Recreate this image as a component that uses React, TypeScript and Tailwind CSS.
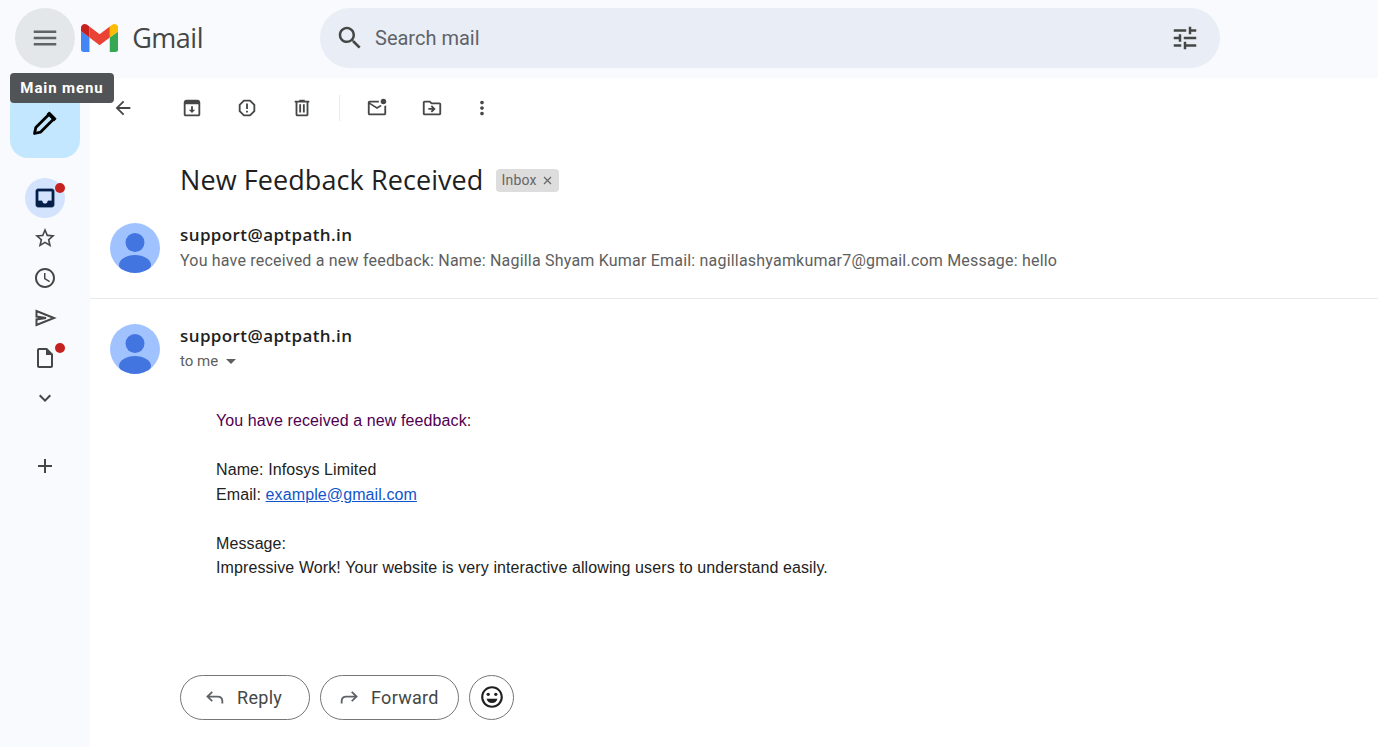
import type { ReactNode } from 'react';

function Icon({ size = 24, className = '', children }: { size?: number; className?: string; children: ReactNode }) {
  return (
    <svg width={size} height={size} viewBox="0 0 24 24" fill="currentColor" className={className}>
      {children}
    </svg>
  );
}

function GmailLogo() {
  return (
    <svg width="38" height="28" viewBox="52 42 88 66">
      <path fill="#4285f4" d="M58 108h14V74L52 59v43c0 3.32 2.69 6 6 6" />
      <path fill="#34a853" d="M120 108h14c3.32 0 6-2.69 6-6V59l-20 15" />
      <path fill="#fbbc04" d="M120 48v26l20-15v-8c0-7.42-8.47-11.65-14.4-7.2" />
      <path fill="#ea4335" d="M72 74V48l24 18 24-18v26L96 92" />
      <path fill="#c5221f" d="M52 51v8l20 15V48l-5.6-4.2c-5.94-4.45-14.4-.22-14.4 7.2" />
    </svg>
  );
}

function Avatar() {
  return (
    <svg width="50" height="50" viewBox="0 0 50 50" className="shrink-0">
      <defs>
        <clipPath id="avatar-clip">
          <circle cx="25" cy="25" r="25" />
        </clipPath>
      </defs>
      <circle cx="25" cy="25" r="25" fill="#a0c3ff" />
      <g clipPath="url(#avatar-clip)" fill="#4375e0">
        <circle cx="25" cy="19.5" r="9.5" />
        <ellipse cx="25" cy="42" rx="16" ry="10" />
      </g>
    </svg>
  );
}

function SideIcon({ dot, active, children }: { dot?: boolean; active?: boolean; children: ReactNode }) {
  return (
    <div className={`relative flex h-10 w-10 items-center justify-center rounded-full ${active ? 'bg-[#d3e3fd] text-[#041e49]' : 'text-[#444746]'}`}>
      {children}
      {dot && <span className="absolute right-0 top-[5px] h-[10px] w-[10px] rounded-full bg-[#c5221f]" />}
    </div>
  );
}

function ToolIcon({ className = '', children }: { className?: string; children: ReactNode }) {
  return <div className={`flex h-[22px] w-[22px] items-center justify-center text-[#444746] ${className}`}>{children}</div>;
}

export default function App() {
  return (
    <div className="relative flex h-[747px] w-[1378px] flex-col overflow-hidden bg-[#f8fafd] font-['Roboto',sans-serif]">
      {/* Top bar */}
      <header className="flex h-[78px] shrink-0 items-start">
        <div className="ml-[15px] mt-[8px] flex h-[60px] w-[60px] items-center justify-center rounded-full bg-[#e4e7ea] text-[#5f6368]">
          <Icon size={30}>
            <path d="M3 18h18v-2H3v2zm0-5h18v-2H3v2zm0-7v2h18V6H3z" />
          </Icon>
        </div>
        <div className="ml-[6px] mt-[24px] flex h-[28px] w-[122px] items-center">
          <GmailLogo />
          <span className="ml-[14px] font-['Open_Sans',sans-serif] text-[27px] leading-[28px] tracking-[-0.5px] text-[#444746]">Gmail</span>
        </div>
        <div className="ml-[117px] mt-[8px] flex h-[60px] w-[900px] items-center rounded-full bg-[#e9eef6] pl-[15px] pr-[20px] text-[#444746]">
          <Icon size={30}>
            <path d="M15.5 14h-.79l-.28-.27C15.41 12.59 16 11.11 16 9.5 16 5.91 13.09 3 9.5 3S3 5.91 3 9.5 5.91 16 9.5 16c1.61 0 3.09-.59 4.23-1.57l.27.28v.79l5 4.99L20.49 19l-4.99-5zm-6 0C7.01 14 5 11.99 5 9.5S7.01 5 9.5 5 14 7.01 14 9.5 11.99 14 9.5 14z" />
          </Icon>
          <span className="ml-[10px] flex-1 text-[20px] text-[#5f6368]">Search mail</span>
          <Icon size={30}>
            <path d="M3 17v2h6v-2H3zM3 5v2h10V5H3zm10 16v-2h8v-2h-8v-2h-2v6h2zM7 9v2H3v2h4v2h2V9H7zm14 4v-2H11v2h10zm-6-4h2V7h4V5h-4V3h-2v6z" />
          </Icon>
        </div>
      </header>

      <div className="flex flex-1">
        {/* Left rail */}
        <aside className="flex w-[90px] shrink-0 flex-col">
          <div className="ml-[10px] mt-[10px] flex h-[70px] w-[70px] items-center justify-center rounded-[18px] bg-[#c2e7ff] text-black">
            <svg width="26" height="26" viewBox="0 0 26 26" fill="none" stroke="currentColor" strokeWidth="2.8" strokeLinejoin="round">
              <path d="M2.5 23.5l1.3-5.9L17.6 3.8l4.6 4.6L8.4 22.2z" />
              <path d="M17.2 1.4l7.4 7.4-2.6 2.6-7.4-7.4z" fill="currentColor" stroke="none" />
            </svg>
          </div>
          <div className="ml-[25px] mt-[20px] flex flex-col">
            <SideIcon active dot>
              <Icon>
                <path stroke="currentColor" strokeWidth="0.8" d="M19 3H4.99c-1.11 0-1.98.89-1.98 2L3 19c0 1.1.88 2 1.99 2H19c1.1 0 2-.9 2-2V5c0-1.11-.9-2-2-2zm0 12h-4c0 1.66-1.35 3-3 3s-2.99-1.34-3-3H4.99V5H19v10z" />
              </Icon>
            </SideIcon>
            <SideIcon>
              <Icon>
                <path d="M22 9.24l-7.19-.62L12 2 9.19 8.63 2 9.24l5.46 4.73L5.82 21 12 17.27 18.18 21l-1.63-7.03L22 9.24zM12 15.4l-3.76 2.27 1-4.28-3.32-2.88 4.38-.38L12 6.1l1.71 4.04 4.38.38-3.32 2.88 1 4.28L12 15.4z" />
              </Icon>
            </SideIcon>
            <SideIcon>
              <Icon>
                <path d="M11.99 2C6.47 2 2 6.48 2 12s4.47 10 9.99 10C17.52 22 22 17.52 22 12S17.52 2 11.99 2zM12 20c-4.42 0-8-3.58-8-8s3.58-8 8-8 8 3.58 8 8-3.58 8-8 8z" />
                <path d="M12.5 7H11v6l5.25 3.15.75-1.23-4.5-2.67z" />
              </Icon>
            </SideIcon>
            <SideIcon>
              <svg width="24" height="24" viewBox="0 0 24 24" fill="none" stroke="currentColor" strokeWidth="2">
                <path d="M3.5 5v5.6L13 12l-9.5 1.4V19L21 12z" />
              </svg>
            </SideIcon>
            <SideIcon dot>
              <Icon>
                <path d="M14 2H6c-1.1 0-1.99.9-1.99 2L4 20c0 1.1.89 2 1.99 2H18c1.1 0 2-.9 2-2V8l-6-6zM6 20V4h7v5h5v11H6z" />
              </Icon>
            </SideIcon>
            <SideIcon>
              <Icon>
                <path d="M16.59 8.59L12 13.17 7.41 8.59 6 10l6 6 6-6z" />
              </Icon>
            </SideIcon>
            <div className="mt-[28px]">
              <SideIcon>
                <Icon>
                  <path d="M19 13h-6v6h-2v-6H5v-2h6V5h2v6h6v2z" />
                </Icon>
              </SideIcon>
            </div>
          </div>
        </aside>

        {/* Message pane */}
        <main className="flex flex-1 flex-col bg-white">
          {/* Toolbar */}
          <div className="flex h-[60px] shrink-0 items-center pl-[22px]">
            <ToolIcon className="text-[#5f6368]">
              <Icon size={22}>
                <path d="M20 11H7.83l5.59-5.59L12 4l-8 8 8 8 1.41-1.41L7.83 13H20v-2z" />
              </Icon>
            </ToolIcon>
            <ToolIcon className="ml-[47px]">
              <Icon size={24}>
                <path fillRule="evenodd" d="M6 3h12c1.66 0 3 1.34 3 3v13c0 1.1-.9 2-2 2H5c-1.1 0-2-.9-2-2V6c0-1.66 1.34-3 3-3zM5 8v11h14V8H5z" />
                <path d="M11 10h2v4h2.5L12 17.5 8.5 14H11z" />
              </Icon>
            </ToolIcon>
            <ToolIcon className="ml-[33px]">
              <Icon size={24}>
                <path d="M15.73 3H8.27L3 8.27v7.46L8.27 21h7.46L21 15.73V8.27L15.73 3zM19 14.9L14.9 19H9.1L5 14.9V9.1L9.1 5h5.8L19 9.1v5.8z" />
                <path d="M11 7h2v6h-2zM11 15h2v2h-2z" />
              </Icon>
            </ToolIcon>
            <ToolIcon className="ml-[33px]">
              <Icon size={24}>
                <path d="M15 4V3H9v1H4v2h1v13c0 1.1.9 2 2 2h10c1.1 0 2-.9 2-2V6h1V4h-5zm2 15H7V6h10v13z" />
                <path d="M9 8h2v9H9zm4 0h2v9h-2z" />
              </Icon>
            </ToolIcon>
            <div className="ml-[26px] h-[26px] w-px bg-[#e8eaed]" />
            <ToolIcon className="ml-[26px]">
              <Icon size={26}>
                <path d="M22 8.98V18c0 1.1-.9 2-2 2H4c-1.1 0-2-.9-2-2V6c0-1.1.9-2 2-2h10.1c-.06.32-.1.66-.1 1s.04.68.1 1H4l8 5 3.67-2.29c.47.43 1.02.76 1.63.98L12 13 4 8v10h16V9.9c.74-.15 1.42-.48 2-.92z" />
                <circle cx="19" cy="5" r="3" />
              </Icon>
            </ToolIcon>
            <ToolIcon className="ml-[33px]">
              <Icon size={26}>
                <path d="M20 6h-8l-2-2H4c-1.1 0-1.99.9-1.99 2L2 18c0 1.1.9 2 2 2h16c1.1 0 2-.9 2-2V8c0-1.1-.9-2-2-2zm0 12H4V6h5.17l2 2H20v10z" />
                <path d="M12.16 12H8v2h4.16l-1.59 1.59L12 17l4-4-4-4-1.41 1.41z" />
              </Icon>
            </ToolIcon>
            <ToolIcon className="ml-[28px]">
              <Icon size={22}>
                <path d="M12 8c1.1 0 2-.9 2-2s-.9-2-2-2-2 .9-2 2 .9 2 2 2zm0 2c-1.1 0-2 .9-2 2s.9 2 2 2 2-.9 2-2-.9-2-2-2zm0 6c-1.1 0-2 .9-2 2s.9 2 2 2 2-.9 2-2-.9-2-2-2z" />
              </Icon>
            </ToolIcon>
          </div>

          {/* Subject */}
          <div className="mt-[22px] flex h-[40px] items-center pl-[90px]">
            <h1 className="font-['Open_Sans',sans-serif] text-[27px] font-normal leading-[40px] tracking-[0.08px] text-[#1f1f1f]">New Feedback Received</h1>
            <span className="ml-[13px] flex h-[23px] w-[63px] items-center rounded-[4px] bg-[#dddddd] pl-[5px] text-[14px] tracking-[0.2px] text-[#666666]">
              Inbox
              <svg width="9" height="9" viewBox="0 0 9 9" className="ml-[6px]" stroke="#666666" strokeWidth="1.2">
                <path d="M1 1l7 7M8 1L1 8" />
              </svg>
            </span>
          </div>

          {/* Collapsed message */}
          <div className="mt-[23px] flex h-[76px] items-start border-b border-[#e8eaed] pl-[20px]">
            <Avatar />
            <div className="ml-[20px] flex flex-col">
              <span className="font-['Open_Sans',sans-serif] text-[17px] font-semibold leading-[24px] tracking-[0.4px] text-[#1f1f1f]">support@aptpath.in</span>
              <span className="mt-[2px] text-[16px] leading-[24px] tracking-[0.2px] text-[#5e5e5e]">You have received a new feedback: Name: Nagilla Shyam Kumar Email: nagillashyamkumar7@gmail.com Message: hello</span>
            </div>
          </div>

          {/* Open message */}
          <div className="mt-[25px] flex items-start pl-[20px]">
            <Avatar />
            <div className="ml-[20px] flex flex-col">
              <span className="font-['Open_Sans',sans-serif] text-[17px] font-semibold leading-[24px] tracking-[0.4px] text-[#1f1f1f]">support@aptpath.in</span>
              <div className="mt-[1px] flex h-[24px] items-center text-[15px] text-[#5e5e5e]">
                to me
                <svg width="10" height="5" viewBox="0 0 10 5" className="ml-[8px]" fill="#5e5e5e">
                  <path d="M0 0h10L5 5z" />
                </svg>
              </div>
            </div>
          </div>

          <div className="ml-[126px] mt-[35px] flex flex-col font-['Liberation_Sans',sans-serif] text-[16px] leading-[24.5px] tracking-[0.1px] text-[#222222]">
            <p>
              <span className="text-[#500050]">You have received a new feedback</span>:
            </p>
            <p className="mt-[24.5px]">Name: Infosys Limited</p>
            <p>
              Email: <a href="#" className="text-[#1155cc] underline">example@gmail.com</a>
            </p>
            <p className="mt-[24.5px]">Message:</p>
            <p>Impressive Work! Your website is very interactive allowing users to understand easily.</p>
          </div>

          {/* Actions */}
          <div className="mt-[94px] flex items-center gap-[10px] pl-[90px]">
            <button className="flex h-[45px] w-[130px] items-center rounded-full border border-[#747775] pl-[23px] text-[18px] tracking-[0.3px] text-[#444746]">
              <svg width="22" height="22" viewBox="0 0 24 24" fill="none" stroke="#5f6368" strokeWidth="2">
                <path d="M9 6.5 3.8 11.5 9 16.5M3.8 11.5H15c3 0 5 2 5 5V19" />
              </svg>
              <span className="ml-[11px]">Reply</span>
            </button>
            <button className="flex h-[45px] w-[139px] items-center rounded-full border border-[#747775] pl-[17px] text-[18px] tracking-[0.3px] text-[#444746]">
              <svg width="22" height="22" viewBox="0 0 24 24" fill="none" stroke="#5f6368" strokeWidth="2">
                <path d="M15 6.5 20.2 11.5 15 16.5M20.2 11.5H9c-3 0-5 2-5 5V19" />
              </svg>
              <span className="ml-[11px]">Forward</span>
            </button>
            <button className="flex h-[45px] w-[45px] items-center justify-center rounded-full border border-[#747775] text-[#1f1f1f]">
              <Icon size={26}>
                <path d="M11.99 2C6.47 2 2 6.48 2 12s4.47 10 9.99 10C17.52 22 22 17.52 22 12S17.52 2 11.99 2zM12 20c-4.42 0-8-3.58-8-8s3.58-8 8-8 8 3.58 8 8-3.58 8-8 8z" />
                <circle cx="8.5" cy="9.5" r="1.5" />
                <circle cx="15.5" cy="9.5" r="1.5" />
                <path d="M7 13.5h10c-.5 2.5-2.5 4-5 4s-4.5-1.5-5-4z" />
              </Icon>
            </button>
          </div>
        </main>
      </div>

      {/* Tooltip for the hovered menu button */}
      <div className="absolute left-[10px] top-[73px] flex h-[30px] w-[104px] items-center justify-center rounded-[4px] bg-[#505457] text-[15px] font-bold tracking-[0.9px] text-white">
        Main menu
      </div>
    </div>
  );
}
